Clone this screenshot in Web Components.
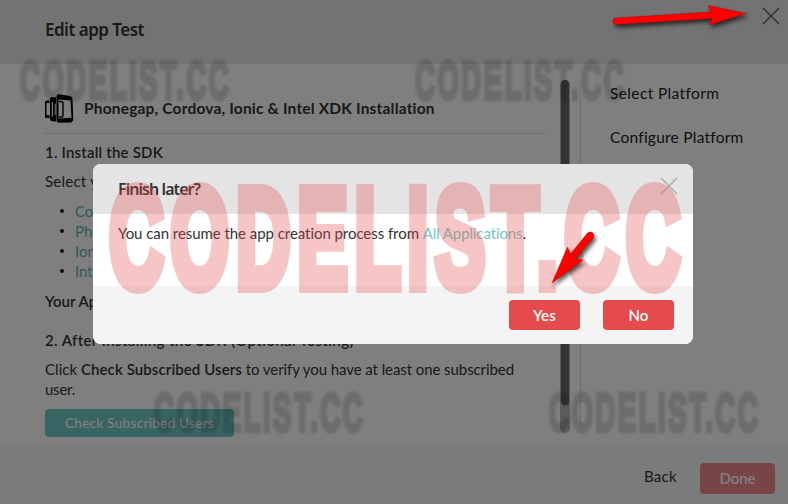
<!DOCTYPE html>
<html lang="en">
<head>
<meta charset="utf-8">
<title>Edit app Test</title>
<style>
html,body{margin:0;width:788px;height:504px;overflow:hidden}
body{font-family:Lato,"Open Sans",sans-serif;font-size:15px;line-height:20px;color:#333}
</style>
</head>
<body>
<app-wizard></app-wizard>
<script>
const define = (name, html, setup) => customElements.define(name, class extends HTMLElement {
  connectedCallback() {
    if (this.shadowRoot) return;
    const t = document.createElement('template');
    t.innerHTML = html;
    this.attachShadow({ mode: 'open' }).append(t.content.cloneNode(true));
    if (setup) setup(this, this.shadowRoot);
  }
});

/* One line of text, tracked so that it fills its "w" attribute. */
define('fit-text', `<style>:host{display:block;white-space:pre;width:max-content}span{display:inline-block}</style><span><slot></slot></span>`,
  (el, root) => {
    const s = root.querySelector('span');
    const n = el.textContent.length;
    const diff = +el.getAttribute('w') - s.getBoundingClientRect().width;
    s.style.letterSpacing = diff / n + 'px';
  });

define('close-icon', `<style>:host{display:block;width:18px;height:18px;color:#333}svg{display:block}</style>
<svg width="18" height="18" viewBox="0 0 18 18" fill="none" stroke="currentColor" stroke-width="1.4"><path d="M1 1L17 17M17 1L1 17"/></svg>`);

define('ui-button', `<style>:host{display:flex;align-items:center;justify-content:center;box-sizing:border-box;padding-bottom:1px;border-radius:4px;background:#e54b4d;color:#fff;font-weight:600}</style><slot></slot>`);

define('phones-icon', `<style>:host{display:block;width:29px;height:30px}svg{display:block}</style>
<svg width="29" height="30" viewBox="0 0 29 30">
<path d="M0 8Q0 6.500 1.500 6.500H4.500V9H1.500V21H4.500V24H1.500Q0 24 0 22.500Z"/>
<path fill-rule="evenodd" d="M7 3L11 3.500V27.500L7 27.300Q5 27 5 25V5Q5 3 7 3ZM6.800 8V22.500H8V8ZM9.700 9.500V21H10.700V9.500Z"/>
<path fill-rule="evenodd" d="M14 .3L25 2Q27.300 2.500 27.500 5L28.300 25Q28.300 28 26 28.500L14 28.800Q11.500 28.800 11.500 26V3Q11.500 0 14 .3ZM13.500 5.500V24.500L26.500 23.700L25.500 6.500Z"/>
<path fill="none" stroke="#000" stroke-width="1.4" d="M14 7.500H16.500Q18 7.500 18 9V21.500Q18 23 16.500 23H14"/></svg>`);

define('wizard-header', `<style>:host{display:flex;box-sizing:border-box;height:64px;padding:19px 0 0 45px;background:#e6e6e6}
fit-text{font:600 17px/22px "Noto Sans",sans-serif;color:#333}</style><fit-text w="99">Edit app Test</fit-text>`);

define('install-guide', `<style>
:host{display:block;width:500px;padding-top:30px;color:#333}
.h{display:flex;box-sizing:border-box;height:40px;border-bottom:1px solid #dedede}
.h fit-text{margin:4px 0 0 10px;font-weight:700;font-size:15.500px}
.one{margin-top:8px;font-weight:600}.sel{margin-top:9px}
ul{list-style:none;margin:10px 0 0;padding:0 0 0 15px}
li{display:flex;align-items:center;height:20px;gap:11px;color:#65afb2}
li:before{content:"";width:4px;height:4px;border-radius:50%;background:#222}
.app{margin-top:10px;font-weight:600}.two{margin-top:19px;font-weight:600}.click{display:flex;margin-top:9px}
ui-button{margin-top:10px;width:189px;height:28px;background:#73c8c8;font-size:13.500px;font-weight:500}
</style>
<div class="h"><phones-icon></phones-icon><fit-text w="351">Phonegap, Cordova, Ionic &amp; Intel XDK Installation</fit-text></div>
<fit-text class="one" w="118">1. Install the SDK</fit-text>
<fit-text class="sel" w="76">Select your</fit-text>
<ul><li>Cordova</li><li>Phonegap</li><li>Ionic</li><li>Intel XDK</li></ul>
<fit-text class="app" w="84">Your App ID:</fit-text>
<fit-text class="two" w="309">2. After Installing the SDK (Optional Testing)</fit-text>
<div class="click"><fit-text w="36">Click </fit-text><fit-text w="161" style="font-weight:600">Check Subscribed Users</fit-text><fit-text w="272"> to verify you have at least one subscribed</fit-text></div>
<fit-text w="30">user.</fit-text>
<ui-button><fit-text w="149">Check Subscribed Users</fit-text></ui-button>`);

define('scroll-bar', `<style>:host{display:block;box-sizing:border-box;width:10px;height:353px;margin:16px 0 0 15px;padding:0 1px;border-radius:5px;background:#b8b8b8}
i{display:block;height:325px;border-radius:4px;background:#666}</style><i></i>`);

define('step-list', `<style>:host{display:flex;flex-direction:column;gap:24px;box-sizing:border-box;height:346px;margin:19px 0 0 10px;padding-left:29px;border-left:1px solid #dedede;color:#222;font-size:15.500px}</style>
<fit-text w="109">Select Platform</fit-text><fit-text w="133">Configure Platform</fit-text>`);

define('wizard-footer', `<style>:host{display:flex;justify-content:flex-end;box-sizing:border-box;height:60px;padding:19px 13px 0 0;background:#f6f6f6}
fit-text.b{margin:3px 23px 0 0}ui-button{width:75px;height:31px;background:#f1888a}</style>
<fit-text class="b" w="33">Back</fit-text><ui-button><fit-text w="36">Done</fit-text></ui-button>`);

define('water-mark', `<style>:host{position:absolute;display:block;width:209px;height:43px;opacity:.14;color:#000;filter:blur(.8px);pointer-events:none}
:host([large]){width:572px;height:113px;opacity:.31;color:#e5484b;filter:blur(.5px)}
svg{display:block;width:100%;height:100%;overflow:visible}</style>
<svg viewBox="0 0 572 113" preserveAspectRatio="none"><text x="0" y="0" transform="translate(0 105) scale(.537 1)" textLength="1064" lengthAdjust="spacing" font-family="Liberation Sans" font-weight="700" font-size="141" fill="currentColor" stroke="currentColor" stroke-width="12">CODELIST.CC</text></svg>`);

define('finish-dialog', `<style>
:host{position:absolute;left:93px;top:164px;width:600px;height:180px;display:grid;grid-template-rows:50px 72px 58px;border-radius:8px;overflow:hidden;background:#fff;color:#333}
header{display:flex;justify-content:space-between;padding:14px 15px 0 25px;background:#e4e4e4}
header fit-text{font:600 16px/22px "Noto Sans",sans-serif}header close-icon{color:#aaa;margin-top:-1px}
main{display:flex;padding:9px 0 0 25px}main .a{color:#75c7c7}
footer{display:flex;justify-content:flex-end;gap:23px;padding:14px 19px 0 0;background:#f4f4f4}
ui-button{width:71px;height:30px}
</style>
<header><fit-text w="82">Finish later?</fit-text><close-icon></close-icon></header>
<main><fit-text w="305">You can resume the app creation process from </fit-text><fit-text class="a" w="100">All Applications</fit-text><span>.</span></main>
<footer><ui-button><fit-text w="23">Yes</fit-text></ui-button><ui-button><fit-text w="20">No</fit-text></ui-button></footer>`);

/* Annotation arrows that lie over the whole window. */
define('red-arrows', `<style>:host{position:absolute;inset:0;pointer-events:none}svg{display:block;filter:drop-shadow(2px 3px 2px rgba(0,0,0,.65))}</style>
<svg width="788" height="504" fill="#f00" stroke="#900" stroke-width=".4" stroke-linejoin="round">
<path d="M616 18L711 12L708 5.500L746 13.500L709 25L712 18.500L616 24.500Q613 24 613 21Q613 18 616 18Z"/>
<path d="M587.500 233Q590 231 593 233Q595 236 592.500 239L575.500 259L583 260L552 283L567.500 247L570.500 254Z"/></svg>`);

define('app-wizard', `<style>
:host{position:relative;display:block;width:788px;height:504px;background:#fff;overflow:hidden}
.body{display:flex;box-sizing:border-box;height:380px;padding-left:45px}
.shade{position:absolute;inset:0;background:rgba(0,0,0,.5)}
.x{position:absolute;left:762px;top:7px;color:#303030}
</style>
<wizard-header></wizard-header>
<div class="body"><install-guide></install-guide><scroll-bar></scroll-bar><step-list></step-list></div>
<wizard-footer></wizard-footer>
<div class="shade"></div>
<close-icon class="x"></close-icon>
<water-mark style="left:20px;top:59px"></water-mark><water-mark style="left:415px;top:59px"></water-mark>
<water-mark style="left:154px;top:391px"></water-mark><water-mark style="left:549px;top:391px"></water-mark>
<finish-dialog></finish-dialog>
<water-mark large style="left:109px;top:182px"></water-mark>
<red-arrows></red-arrows>`);
</script>
</body>
</html>
